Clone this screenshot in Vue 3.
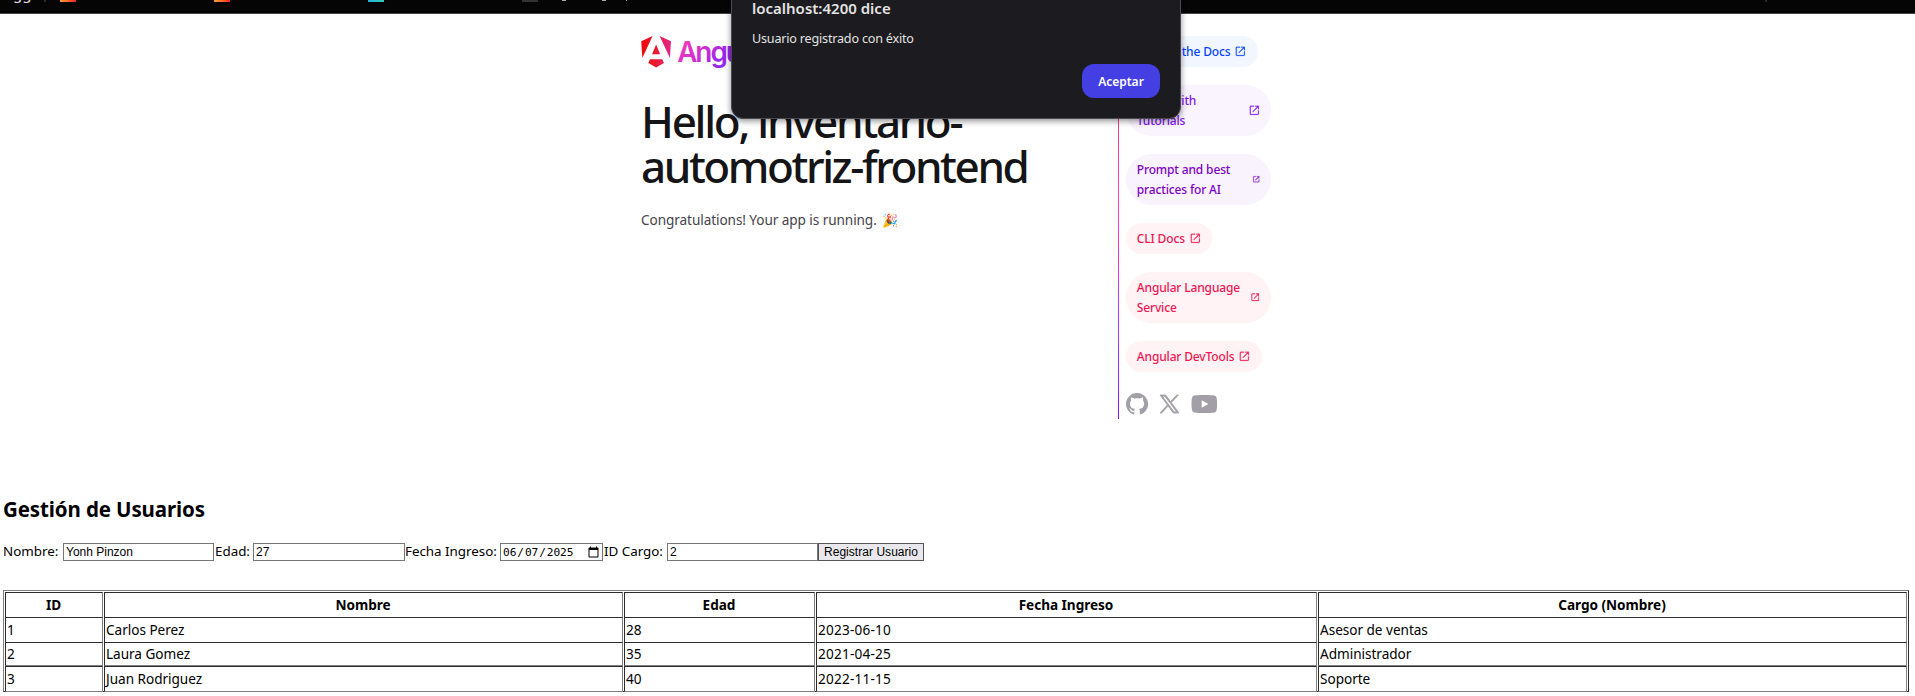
<script setup>
import { ref } from 'vue'

const pills = [
  { text: ['Explore the Docs'], tone: 'blue', icon: 12.6 },
  { text: ['Learn with', 'Tutorials'], tone: 'violet', icon: 12.6, wide: true },
  { text: ['Prompt and best', 'practices for AI'], tone: 'french', icon: 8.5, wide: true },
  { text: ['CLI Docs'], tone: 'red', icon: 12.6 },
  { text: ['Angular Language', 'Service'], tone: 'red', icon: 10.5, wide: true },
  { text: ['Angular DevTools'], tone: 'red', icon: 12.6 },
]

const form = ref({ nombre: 'Yonh Pinzon', edad: '27', fecha: '2025-06-07', cargo: '2' })

const headers = ['ID', 'Nombre', 'Edad', 'Fecha Ingreso', 'Cargo (Nombre)']
const users = [
  [1, 'Carlos Perez', 28, '2023-06-10', 'Asesor de ventas'],
  [2, 'Laura Gomez', 35, '2021-04-25', 'Administrador'],
  [3, 'Juan Rodriguez', 40, '2022-11-15', 'Soporte'],
]
</script>

<template>
  <div class="window">
    <header class="bookmarks">
      <svg width="1915" height="13" viewBox="0 0 1915 13">
        <defs>
          <linearGradient id="warm"><stop offset="0" stop-color="#ff9a2e" /><stop offset=".5" stop-color="#ff6a2a" /><stop offset="1" stop-color="#ff1f1f" /></linearGradient>
          <linearGradient id="teal"><stop offset="0" stop-color="#25b4dc" /><stop offset="1" stop-color="#35c6b4" /></linearGradient>
        </defs>
        <text x="13" y="-1" class="mark">gg</text>
        <rect x="44" width="2" height="2" fill="#2c2c2c" />
        <rect x="60" width="16" height="2" fill="url(#warm)" />
        <rect x="214" width="16" height="2" fill="url(#warm)" />
        <rect x="368" width="16" height="2" fill="url(#teal)" />
        <rect x="522" width="16" height="2" fill="#333" />
        <rect x="562" width="4" height="1" fill="#aaa" />
        <rect x="602" width="4" height="1" fill="#aaa" />
        <rect x="626" width="1" height="1" fill="#aaa" />
        <rect x="1765" width="2" height="2" fill="#2c2c2c" />
      </svg>
    </header>

    <main class="welcome">
      <section class="intro">
        <svg class="logo" width="132" height="32" viewBox="0 0 982 239">
          <defs>
            <linearGradient id="shield" x1="0" y1="0" x2="1" y2="0">
              <stop offset="0" stop-color="#f0060b" /><stop offset=".45" stop-color="#ea1a2c" /><stop offset="1" stop-color="#e4248c" />
            </linearGradient>
            <linearGradient id="word" gradientUnits="userSpaceOnUse" x1="340" y1="40" x2="560" y2="210">
              <stop offset="0" stop-color="#ea38c0" /><stop offset=".5" stop-color="#cf2fd0" /><stop offset="1" stop-color="#9a25ee" />
            </linearGradient>
          </defs>
          <path fill="url(#shield)" d="M222.077 39.192l-8.019 125.923L137.387 0l84.69 39.192zm-53.105 162.825l-57.933 33.056-57.934-33.056 11.783-28.556h92.301l11.783 28.556zM111.039 62.675l30.357 73.803H80.681l30.358-73.803zM7.937 165.115L0 39.192 84.69 0 7.937 165.115z" />
          <text class="word" x="268" y="195" fill="url(#word)">Angular</text>
        </svg>
        <h1><span class="first">Hello, inventario-</span><br>automotriz-frontend</h1>
        <p>Congratulations! Your app is running. <span class="party">🎉</span></p>
      </section>

      <div class="divider"></div>

      <aside class="links">
        <a v-for="p in pills" :key="p.text[0]" class="pill" :class="[p.tone, { wide: p.wide }]">
          <span><template v-for="(line, i) in p.text" :key="line"><br v-if="i">{{ line }}</template></span>
          <svg :width="p.icon" :height="p.icon" viewBox="0 -960 960 960" fill="currentColor" stroke="currentColor" stroke-width="18">
            <path d="M212.31-140Q182-140 161-161q-21-21-21-51.31v-535.38Q140-778 161-799q21-21 51.31-21h252.3v60h-252.3q-4.62 0-8.46 3.85-3.85 3.84-3.85 8.46v535.38q0 4.62 3.85 8.46 3.84 3.85 8.46 3.85h535.38q4.62 0 8.46-3.85 3.85-3.84 3.85-8.46v-252.3h60v252.3Q820-182 799-161q-21 21-51.31 21H212.31Zm176.46-206.62-42.15-42.15L717.85-760H560v-60h260v260h-60v-157.85L388.77-346.62Z" />
          </svg>
        </a>
        <div class="social">
          <svg width="22.5" height="21.6" viewBox="0 0 25 24">
            <path d="M12.3047 0C5.50634 0 0 5.50942 0 12.3047C0 17.7423 3.52529 22.3535 8.41332 23.9787C9.02856 24.0946 9.25414 23.7142 9.25414 23.3871C9.25414 23.0949 9.24389 22.3207 9.23876 21.2953C5.81601 22.0377 5.09414 19.6444 5.09414 19.6444C4.53427 18.2243 3.72524 17.8449 3.72524 17.8449C2.61064 17.082 3.81137 17.0973 3.81137 17.0973C5.04697 17.1835 5.69604 18.3647 5.69604 18.3647C6.79321 20.2463 8.57636 19.7029 9.27978 19.3881C9.39052 18.5924 9.70736 18.0499 10.0591 17.7423C7.32641 17.4347 4.45429 16.3765 4.45429 11.6618C4.45429 10.3185 4.9311 9.22133 5.72065 8.36C5.58222 8.04931 5.16694 6.79833 5.82831 5.10337C5.82831 5.10337 6.85883 4.77319 9.2121 6.36459C10.1965 6.09082 11.2424 5.95546 12.2883 5.94931C13.3342 5.95546 14.3801 6.09082 15.3644 6.36459C17.7023 4.77319 18.7328 5.10337 18.7328 5.10337C19.3942 6.79833 18.9789 8.04931 18.8559 8.36C19.6403 9.22133 20.1171 10.3185 20.1171 11.6618C20.1171 16.3888 17.2409 17.4296 14.5031 17.7321C14.9338 18.1012 15.3337 18.8559 15.3337 20.0084C15.3337 21.6552 15.3183 22.978 15.3183 23.3779C15.3183 23.7009 15.5336 24.0854 16.1642 23.9623C21.0871 22.3484 24.6094 17.7341 24.6094 12.3047C24.6094 5.50942 19.0999 0 12.3047 0Z" />
          </svg>
          <svg class="x" width="19" height="18" viewBox="0 0 24 24" preserveAspectRatio="none" stroke="#a39fa9" stroke-width="1.1">
            <path fill-rule="evenodd" d="M14.2833 10.1624L23.2178 0H21.1006L13.3427 8.82385L7.14656 0H0L9.36984 13.3432L0 24H2.11732L10.3098 14.6814L16.8534 24H24L14.2833 10.1624ZM11.3833 13.4609L10.4339 12.1324L2.88022 1.55881H6.13229L12.2282 10.092L13.1776 11.4204L21.1016 22.5123H17.8495L11.3833 13.4609Z" />
          </svg>
          <svg class="yt" width="26.1" height="18" viewBox="0 0 29 20">
            <path fill-rule="evenodd" d="M27.4896 1.52422C27.9301 1.96749 28.2463 2.51866 28.4068 3.12258C29.0004 5.35161 29.0004 10 29.0004 10C29.0004 10 29.0004 14.6484 28.4068 16.8774C28.2463 17.4813 27.9301 18.0325 27.4896 18.4758C27.0492 18.9191 26.5 19.2389 25.8972 19.4032C23.6778 20 14.8068 20 14.8068 20C14.8068 20 5.93586 20 3.71651 19.4032C3.11363 19.2389 2.56449 18.9191 2.12405 18.4758C1.68361 18.0325 1.36732 17.4813 1.20683 16.8774C0.613281 14.6484 0.613281 10 0.613281 10C0.613281 10 0.613281 5.35161 1.20683 3.12258C1.36732 2.51866 1.68361 1.96749 2.12405 1.52422C2.56449 1.08095 3.11363 0.76113 3.71651 0.596774C5.93586 0 14.8068 0 14.8068 0C14.8068 0 23.6778 0 25.8972 0.596774C26.5 0.76113 27.0492 1.08095 27.4896 1.52422ZM19.3229 10L11.9036 5.77905V14.221L19.3229 10Z" />
          </svg>
        </div>
      </aside>
    </main>

    <section class="users">
      <h2>Gestión de Usuarios</h2>
      <form class="form" @submit.prevent>
        <label class="l1">Nombre:</label><input v-model="form.nombre" type="text">
        <label class="l2">Edad:</label><input v-model="form.edad" type="text">
        <label class="l3">Fecha Ingreso:</label><input v-model="form.fecha" type="date">
        <label class="l4">ID Cargo:</label><input v-model="form.cargo" type="text">
        <button type="submit">Registrar Usuario</button>
      </form>
      <div class="table">
        <div class="row head"><span v-for="h in headers" :key="h">{{ h }}</span></div>
        <div v-for="u in users" :key="u[0]" class="row"><span v-for="(c, i) in u" :key="i" :class="{ num: i === 3 }">{{ c }}</span></div>
      </div>
    </section>

    <div class="dialog">
      <strong>localhost:4200 dice</strong>
      <p>Usuario registrado con éxito</p>
      <button>Aceptar</button>
    </div>
  </div>
</template>

<style>
body { background: #fff; }
</style>

<style scoped>
.window { position: relative; width: 1915px; height: 696px; overflow: hidden; font-family: "Noto Sans", sans-serif; color: #000; }
.window * { box-sizing: border-box; }
.bookmarks { height: 14px; background: #050505; border-bottom: 1px solid #444; }
.bookmarks svg { display: block; }
.mark { font: 15px "Noto Sans", sans-serif; fill: #e3e3e3; }

.welcome { display: grid; grid-template-columns: 477px 1px 145px; column-gap: 0; height: 383px; margin: 22px 0 0 641px; }
.logo { display: block; overflow: visible; }
.word { font: 600 208px "Inter", sans-serif; letter-spacing: -15px; }
h1 { margin: 31px 0 0; font-size: 44px; line-height: 45px; font-weight: 500; letter-spacing: -2.42px; color: #151417; white-space: nowrap; }
.first { letter-spacing: -2.28px; }
.intro p { display: flex; gap: 5px; align-items: center; margin: 19px 0 0; font-size: 13.6px; line-height: 24px; letter-spacing: -.08px; color: #45434b; }
.party { font-size: 13px; line-height: 24px; letter-spacing: 0; }
.divider { background: linear-gradient(180deg, oklch(63.32% .24 31.68) 0%, oklch(69.02% .277 332.77) 50%, oklch(53.18% .28 296.97) 100%); }

.links { display: flex; flex-direction: column; align-items: flex-start; gap: 18px; width: 145px; margin-left: 7px; }
.pill { display: flex; align-items: center; padding: 5.4px 10.8px; border-radius: 49px; font-size: 12px; font-weight: 500; line-height: 20.16px; letter-spacing: -.15px; white-space: nowrap; }
.pill span { padding-top: .5px; margin-bottom: -.5px; }
.pill svg { margin: 0 0 0 4px; flex: none; }
.pill.wide { width: 145px; justify-content: space-between; }
.blue { color: oklch(51.01% .274 263.83); background: #f2f6ff; }
.violet { color: oklch(53.18% .28 296.97); background: #f9f4fe; }
.french { color: oklch(47.66% .246 305.88); background: #f8f3fd; }
.red { color: oklch(61.42% .238 15.34); background: #fff3f5; }
.social { display: flex; align-items: center; margin-top: 3px; fill: #a39fa9; }
.social svg { display: block; }
.social .x { margin-left: 11.5px; overflow: visible; }
.yt { margin-left: 11.5px; }

.users { padding: 0 6px 0 3px; }
h2 { margin: 74px 0 0; font-size: 20.5px; line-height: 32px; font-weight: 700; letter-spacing: -.12px; }
.form { display: flex; align-items: center; height: 18px; margin: 18px 0 0; font-size: 13.4px; letter-spacing: -.02px; }
.form label { white-space: nowrap; height: 18px; line-height: 16px; }
.l1 { width: 60px; }
.l2 { width: 38px; margin-left: 1px; }
.l3 { width: 95px; }
.l4 { width: 63px; margin-left: 1px; }
.form input { width: 151px; height: 18px; margin: 0; padding: 0 2px; border: 1px solid #767676; border-radius: 0; background: #fff; color: #000; font: 12px "Liberation Sans", sans-serif; outline: none; }
.l2 + input { width: 152px; }
.form input[type="date"] { width: 103px; padding: 0 0 0 1px; font: 11.2px "DejaVu Sans Mono", monospace; letter-spacing: -.1px; }
.form input[type="date"]::-webkit-calendar-picker-indicator { width: 13px; height: 13px; margin-left: 0; }
.form button { width: 106px; height: 18px; padding: 0; border: 1px solid #555; border-radius: 0; background: #e9e9ed; color: #000; font: 12px "Liberation Sans", sans-serif; letter-spacing: .04px; }

.table { display: grid; row-gap: 1px; margin-top: 29px; padding: 1px; border: 1px solid; border-color: #808080 #2c2c2c #2c2c2c #808080; }
.row { display: grid; grid-template-columns: 98px 519px 191px 501px 1fr; column-gap: 1px; height: 24px; font-size: 13.6px; line-height: 24px; letter-spacing: -.03px; }
.row:nth-child(3) { height: 23px; line-height: 22px; }
.row span { padding-left: 1px; border: 1px solid; border-color: #2c2c2c #808080 #808080 #2c2c2c; }
.row .num { letter-spacing: .2px; }
.row.head span { padding: 0 1px 0 0; font-weight: 700; text-align: center; }

.dialog { position: absolute; top: -20px; left: 731px; width: 450px; height: 139px; padding: 20px; border: 1px solid #4a494f; border-radius: 12px; background: #1c1b1f; color: #e3e3e3; box-shadow: 0 2px 6px rgba(0, 0, 0, .45); }
.dialog strong { display: block; margin-top: -3px; font-size: 15px; line-height: 20px; font-weight: 600; }
.dialog p { margin: 12px 0 0; font-size: 12.6px; line-height: 18px; letter-spacing: -.2px; }
.dialog button { display: block; width: 78px; height: 34px; margin: 16px 0 0 auto; padding: 0; border: 0; border-radius: 12px; background: #443fe3; color: #fff; font: 600 12px "Noto Sans", sans-serif; }
</style>
